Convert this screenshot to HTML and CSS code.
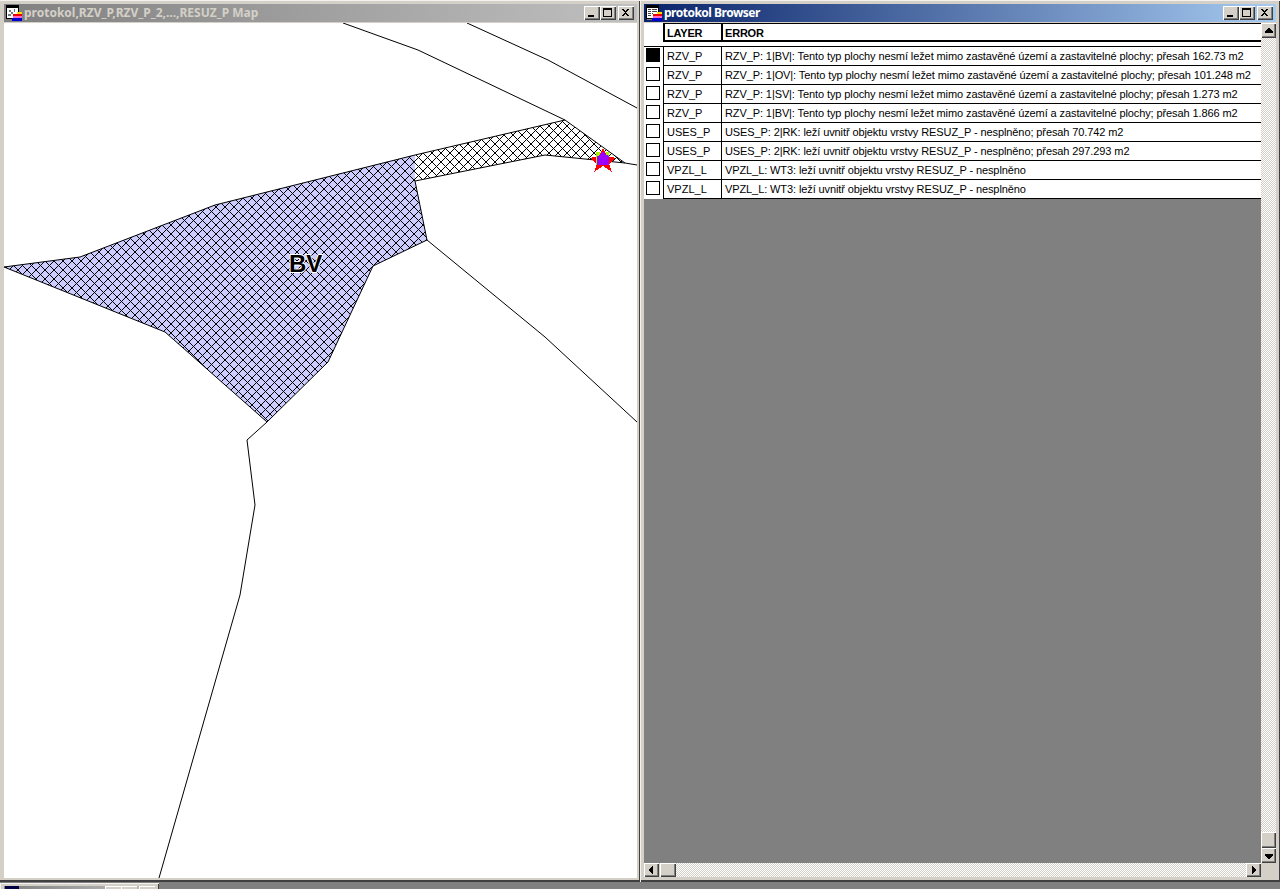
FILE: index.html
```html
<!DOCTYPE html>
<html lang="cs">
<head>
<meta charset="utf-8">
<title>protokol</title>
<link rel="stylesheet" href="styles.css">
</head>
<body>
<div class="desktop">
  <section class="window map-window">
    <header class="titlebar inactive">
      <svg class="app-icon" viewBox="0 0 16 16" width="16" height="16" shape-rendering="crispEdges">
        <rect x="0" y="0" width="13" height="14" fill="#000"/><rect x="1" y="3" width="11" height="10" fill="#fff"/>
        <path d="M3 5h2v2h-2zM5 7h2v2h-2zM2 9h3v2h-3zM8 4h1v3h-1z" fill="#777"/>
        <rect x="1" y="14" width="5" height="1" fill="#808080"/>
        <rect x="11" y="7" width="5" height="2" fill="#ffd800"/><rect x="7" y="9" width="9" height="2" fill="#f00000"/><rect x="7" y="11" width="9" height="2" fill="#ff66cc"/><rect x="6" y="13" width="10" height="3" fill="#0000d0"/>
      </svg>
      <span class="title-text">protokol,RZV_P,RZV_P_2,...,RESUZ_P Map</span>
      <div class="caption-buttons">
        <button class="cap"><svg viewBox="0 0 14 12" width="14" height="12" shape-rendering="crispEdges"><rect x="3" y="8" width="6" height="2"/></svg></button>
        <button class="cap"><svg viewBox="0 0 14 12" width="14" height="12" shape-rendering="crispEdges"><path d="M2 1h9v9h-9zM3 3v6h7v-6z" fill-rule="evenodd"/></svg></button>
        <button class="cap close"><svg viewBox="0 0 14 12" width="14" height="12" shape-rendering="crispEdges"><path d="M3 2h2v1h1v1h1v-1h1v-1h2v1h-1v1h-1v1h-1v1h1v1h1v1h1v1h-2v-1h-1v-1h-1v1h-1v1h-2v-1h1v-1h1v-1h1v-1h-1v-1h-1v-1h-1z"/></svg></button>
      </div>
    </header>
    <div class="map-canvas">
      <svg class="map-svg" viewBox="4 23 633 855" width="633" height="855">
        <defs>
          <pattern id="hatch" width="9" height="9" patternUnits="userSpaceOnUse">
            <path d="M0 0h1v1h-1zM1 1h1v1h-1zM2 2h1v1h-1zM3 3h1v1h-1zM4 4h1v1h-1zM5 5h1v1h-1zM6 6h1v1h-1zM7 7h1v1h-1zM8 8h1v1h-1zM8 0h1v1h-1zM7 1h1v1h-1zM6 2h1v1h-1zM5 3h1v1h-1zM3 5h1v1h-1zM2 6h1v1h-1zM1 7h1v1h-1zM0 8h1v1h-1z" fill="#000" shape-rendering="crispEdges"/>
          </pattern>
        </defs>
        <path class="fill-blue" d="M4 267L80 257L215 205L415 155L415 181L427 240L373 266L328 362L267 422L165 332Z"/>
        <path class="fill-hatch" d="M4 267L80 257L215 205L415 155L415 181L427 240L373 266L328 362L267 422L165 332Z"/>
        <path class="fill-hatch" d="M415 155L565 120L625 163L545 155L415 181Z"/>
        <path class="line" d="M415 181L427 240L373 266L328 362L267 422L165 332L4 267L80 257L215 205L415 155L565 120"/>
        <path class="line" d="M415 181L545 155L625 163"/>
        <path class="line" d="M343 23L418 50L565 120L625 163L637 165"/>
        <path class="line" d="M467 23L548 60L637 108"/>
        <path class="line" d="M427 240L545 337L637 422"/>
        <path class="line" d="M267 422L247 440L255 505L240 595L159 878"/>
        <text class="map-label" x="289" y="272">BV</text>
        <g shape-rendering="crispEdges">
          <polygon fill="#ff0000" points="603,148 607,156 616,158 609,164 612,172 603,166 594,172 597,164 590,158 599,156"/>
          <path fill="#aaee00" d="M596 152h4v4h6v-4h3v6h-12v7h-1z"/>
          <polygon fill="#9900ff" points="603,151 606,155 609,156 609,165 597,165 597,156 600,155"/>
        </g>
      </svg>
    </div>
  </section>

  <section class="window browser-window">
    <header class="titlebar active">
      <svg class="app-icon" viewBox="0 0 16 16" width="16" height="16" shape-rendering="crispEdges">
        <rect x="0" y="0" width="13" height="14" fill="#000"/><rect x="1" y="3" width="11" height="10" fill="#fff"/>
        <path d="M2 4h3v1h-3zM6 4h5v1h-5zM2 6h3v1h-3zM6 6h5v1h-5zM2 8h3v1h-3zM6 8h1v1h-1zM2 10h3v1h-3z" fill="#444"/>
        <rect x="1" y="14" width="5" height="1" fill="#808080"/>
        <rect x="11" y="7" width="5" height="2" fill="#ffd800"/><rect x="7" y="9" width="9" height="2" fill="#f00000"/><rect x="7" y="11" width="9" height="2" fill="#ff66cc"/><rect x="6" y="13" width="10" height="3" fill="#0000d0"/>
      </svg>
      <span class="title-text">protokol Browser</span>
      <div class="caption-buttons">
        <button class="cap"><svg viewBox="0 0 14 12" width="14" height="12" shape-rendering="crispEdges"><rect x="3" y="8" width="6" height="2"/></svg></button>
        <button class="cap"><svg viewBox="0 0 14 12" width="14" height="12" shape-rendering="crispEdges"><path d="M2 1h9v9h-9zM3 3v6h7v-6z" fill-rule="evenodd"/></svg></button>
        <button class="cap close"><svg viewBox="0 0 14 12" width="14" height="12" shape-rendering="crispEdges"><path d="M3 2h2v1h1v1h1v-1h1v-1h2v1h-1v1h-1v1h-1v1h1v1h1v1h1v1h-2v-1h-1v-1h-1v1h-1v1h-2v-1h1v-1h1v-1h1v-1h-1v-1h-1v-1h-1z"/></svg></button>
      </div>
    </header>
    <div class="browser-body">
      <div class="grid-pane">
        <div class="grid-scroll">
          <div class="table-head">
            <div class="head-spacer"></div>
            <div class="head-cell layer-col">LAYER</div>
            <div class="head-cell error-col">ERROR</div>
          </div>
          <div class="table-rows">
            <div class="row"><div class="sel-cell"><span class="check checked"></span></div><div class="cell layer-col">RZV_P</div><div class="cell error-col">RZV_P: 1|BV|: Tento typ plochy nesmí ležet mimo zastavěné území a zastavitelné plochy; přesah 162.73 m2</div></div>
            <div class="row"><div class="sel-cell"><span class="check"></span></div><div class="cell layer-col">RZV_P</div><div class="cell error-col">RZV_P: 1|OV|: Tento typ plochy nesmí ležet mimo zastavěné území a zastavitelné plochy; přesah 101.248 m2</div></div>
            <div class="row"><div class="sel-cell"><span class="check"></span></div><div class="cell layer-col">RZV_P</div><div class="cell error-col">RZV_P: 1|SV|: Tento typ plochy nesmí ležet mimo zastavěné území a zastavitelné plochy; přesah 1.273 m2</div></div>
            <div class="row"><div class="sel-cell"><span class="check"></span></div><div class="cell layer-col">RZV_P</div><div class="cell error-col">RZV_P: 1|BV|: Tento typ plochy nesmí ležet mimo zastavěné území a zastavitelné plochy; přesah 1.866 m2</div></div>
            <div class="row"><div class="sel-cell"><span class="check"></span></div><div class="cell layer-col">USES_P</div><div class="cell error-col">USES_P: 2|RK: leží uvnitř objektu vrstvy RESUZ_P - nesplněno; přesah 70.742 m2</div></div>
            <div class="row"><div class="sel-cell"><span class="check"></span></div><div class="cell layer-col">USES_P</div><div class="cell error-col">USES_P: 2|RK: leží uvnitř objektu vrstvy RESUZ_P - nesplněno; přesah 297.293 m2</div></div>
            <div class="row"><div class="sel-cell"><span class="check"></span></div><div class="cell layer-col">VPZL_L</div><div class="cell error-col">VPZL_L: WT3: leží uvnitř objektu vrstvy RESUZ_P - nesplněno</div></div>
            <div class="row"><div class="sel-cell"><span class="check"></span></div><div class="cell layer-col">VPZL_L</div><div class="cell error-col">VPZL_L: WT3: leží uvnitř objektu vrstvy RESUZ_P - nesplněno</div></div>
          </div>
          <div class="empty-area"></div>
        </div>
        <div class="hscroll">
          <button class="sb-btn h"><svg viewBox="0 0 8 8" width="8" height="8" shape-rendering="crispEdges"><path d="M5 0v8h-1v-1h-1v-1h-1v-1h-1v-2h1v-1h1v-1h1v-1z"/></svg></button>
          <div class="sb-thumb h"></div>
          <div class="sb-track"></div>
          <button class="sb-btn h"><svg viewBox="0 0 8 8" width="8" height="8" shape-rendering="crispEdges"><path d="M2 0h1v1h1v1h1v1h1v2h-1v1h-1v1h-1v1h-1z"/></svg></button>
        </div>
      </div>
      <div class="vscroll-col">
        <div class="vscroll">
          <button class="sb-btn v"><svg viewBox="0 0 10 8" width="10" height="8" shape-rendering="crispEdges"><path d="M4 1h2v1h1v1h1v1h1v2h-8v-2h1v-1h1v-1h1z"/></svg></button>
          <div class="sb-track"></div>
          <div class="sb-thumb v"></div>
          <button class="sb-btn v"><svg viewBox="0 0 10 8" width="10" height="8" shape-rendering="crispEdges"><path d="M1 2h8v2h-1v1h-1v1h-1v1h-2v-1h-1v-1h-1v-1h-1z"/></svg></button>
        </div>
        <div class="corner"></div>
      </div>
    </div>
  </section>

  <section class="window mini-window">
    <header class="titlebar inactive mini-title">
      <span class="mini-icon"></span>
      <div class="mini-buttons"><span class="mini-btn"></span><span class="mini-btn"></span><span class="mini-btn last"></span></div>
    </header>
  </section>
</div>
</body>
</html>
```
FILE: styles.css
```css
* { box-sizing: border-box; }
html, body { margin: 0; padding: 0; width: 1280px; height: 889px; overflow: hidden; }
body { background: #808080; font-family: "Liberation Sans", Arial, sans-serif; }

.desktop { position: relative; width: 1280px; height: 889px; background: #808080; }

.window { position: absolute; background: #d4d0c8; display: flex; flex-direction: column; box-shadow: inset 1px 1px 0 #f4f2ee, inset -1px 0 0 #404040, inset 0 -2px 0 #404040; }

.map-window { left: -1px; top: 0; width: 641px; height: 882px; padding: 4px 3px 4px 5px; }
.browser-window { left: 640px; top: 0; width: 640px; height: 882px; padding: 4px 4px 5px; }
.mini-window { left: 0; top: 883px; width: 159px; height: 30px; padding: 3px 4px; }

.titlebar { flex: none; height: 18px; display: flex; align-items: center; margin-bottom: 1px; }
.titlebar.inactive { background: linear-gradient(90deg, #808080, #c0c0c0); color: #d4d0c8; }
.titlebar.active { background: linear-gradient(90deg, #0a246a, #a6caf0); color: #fff; }
.app-icon { flex: none; margin: 0 2px; }
.title-text { font-family: "Noto Sans", Tahoma, sans-serif; font-weight: bold; font-size: 12px; line-height: 18px; white-space: nowrap; flex: 1; }
.active .title-text { letter-spacing: -0.5px; }

.caption-buttons { flex: none; display: flex; align-items: center; margin-right: 3px; }
.cap { width: 16px; height: 14px; padding: 0; margin: 0; border: 0; background: #d4d0c8; display: flex; align-items: center; justify-content: center; box-shadow: inset 1px 1px 0 #fff, inset -1px -1px 0 #404040, inset -2px -2px 0 #808080; }
.cap.close { margin-left: 2px; }
.cap svg { display: block; fill: #000; }

.map-canvas { flex: 1; background: #fff; overflow: hidden; min-height: 0; }
.map-svg { display: block; }
.fill-blue { fill: #ccccff; stroke: none; }
.fill-hatch { fill: url(#hatch); stroke: none; }
.line { fill: none; stroke: #000; stroke-width: 1; }
.map-label { font-family: "Liberation Sans", Arial, sans-serif; font-size: 24px; font-weight: bold; fill: #000; stroke: #fff; stroke-width: 2px; paint-order: stroke; }

.browser-body { flex: 1; display: flex; min-height: 0; }
.grid-pane { width: 617px; display: flex; flex-direction: column; }
.grid-scroll { flex: 1; display: flex; flex-direction: column; min-height: 0; background: #808080; }

.table-head { flex: none; display: flex; height: 23px; background: #fff; padding-bottom: 4px; }
.head-spacer { width: 19px; background: #fff; }
.head-cell { height: 19px; border-bottom: 2px solid #000; border-left: 2px solid #000; font-weight: bold; font-size: 11px; line-height: 20px; letter-spacing: -0.2px; color: #000; padding-left: 2px; box-shadow: inset 0 1px 0 #000; }
.layer-col { width: 58px; }
.error-col { flex: 1; white-space: nowrap; overflow: hidden; }

.table-rows { flex: none; background: #fff; border-top: 1px solid #000; }
.row { display: flex; height: 19px; border-bottom: 1px solid #000; background: #fff; }
.sel-cell { width: 19px; background: #fff; padding: 1px 0 0 2px; margin-bottom: -1px; }
.check { display: block; width: 14px; height: 14px; border: 1px solid #000; background: #fff; }
.check.checked { background: #000; }
.cell { border-left: 1px solid #000; font-size: 11px; line-height: 18px; color: #000; padding-left: 3px; }
.cell.error-col { letter-spacing: -0.1px; }
.empty-area { flex: 1; background: #808080; }

.hscroll { flex: none; height: 14px; display: flex; }
.sb-btn { padding: 0; margin: 0; border: 0; background: #d4d0c8; display: flex; align-items: center; justify-content: center; box-shadow: inset 1px 1px 0 #fff, inset -1px -1px 0 #404040, inset -2px -2px 0 #808080; flex: none; }
.sb-btn svg { display: block; fill: #000; }
.sb-btn.h { width: 15px; height: 14px; }
.sb-btn.v { width: 15px; height: 15px; }
.sb-thumb { flex: none; background: #d4d0c8; box-shadow: inset 1px 1px 0 #fff, inset -1px -1px 0 #404040, inset -2px -2px 0 #808080; }
.sb-thumb.h { width: 16px; height: 14px; margin-left: 1px; }
.sb-thumb.v { width: 15px; height: 16px; }
.sb-track { flex: 1; background: conic-gradient(#fff 25%, #d4d0c8 0 50%, #fff 0 75%, #d4d0c8 0) 0 0 / 2px 2px; }

.vscroll-col { width: 15px; display: flex; flex-direction: column; }
.vscroll { flex: 1; display: flex; flex-direction: column; min-height: 0; }
.corner { flex: none; height: 14px; background: #d4d0c8; }

.mini-title { height: 18px; justify-content: space-between; margin: 0; }
.mini-icon { display: block; width: 14px; height: 3px; background: #000040; margin-left: 1px; align-self: flex-start; }
.mini-buttons { display: flex; align-self: flex-start; }
.mini-btn { display: block; width: 16px; height: 14px; background: #d4d0c8; box-shadow: inset 1px 1px 0 #fff; }
.mini-btn.last { margin-left: 2px; }
```
